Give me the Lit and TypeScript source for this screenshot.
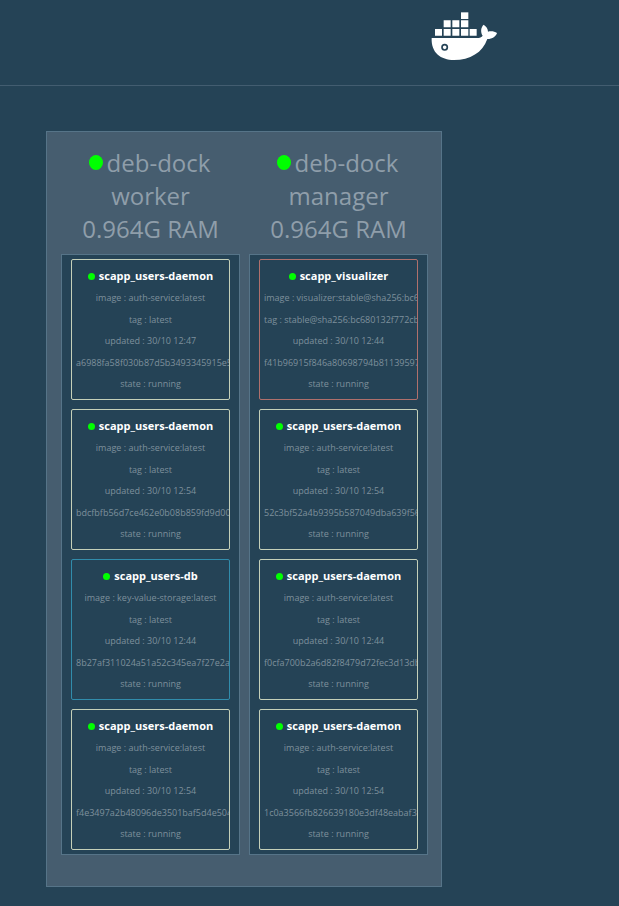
import { LitElement, html, css } from "lit";
import { customElement, property } from "lit/decorators.js";
import { classMap } from "lit/directives/class-map.js";

interface Task {
  name: string;
  image: string;
  tag: string;
  updated: string;
  id: string;
  state: string;
  service: "daemon" | "visualizer" | "db";
}

interface SwarmNode {
  host: string;
  role: string;
  memory: string;
  tasks: Task[];
}

const daemon = (updated: string, id: string): Task => ({
  name: "scapp_users-daemon",
  image: "auth-service:latest",
  tag: "latest",
  updated,
  id,
  state: "running",
  service: "daemon",
});

const NODES: SwarmNode[] = [
  {
    host: "deb-dock",
    role: "worker",
    memory: "0.964G RAM",
    tasks: [
      daemon("30/10 12:47", "a6988fa58f030b87d5b3493345915e5"),
      daemon("30/10 12:54", "bdcfbfb56d7ce462e0b08b859fd9d00"),
      {
        name: "scapp_users-db",
        image: "key-value-storage:latest",
        tag: "latest",
        updated: "30/10 12:44",
        id: "8b27af311024a51a52c345ea7f27e2ad",
        state: "running",
        service: "db",
      },
      daemon("30/10 12:54", "f4e3497a2b48096de3501baf5d4e504"),
    ],
  },
  {
    host: "deb-dock",
    role: "manager",
    memory: "0.964G RAM",
    tasks: [
      {
        name: "scapp_visualizer",
        image: "visualizer:stable@sha256:bc680132f772cb4",
        tag: "stable@sha256:bc680132f772cb4",
        updated: "30/10 12:44",
        id: "f41b96915f846a80698794b811395973",
        state: "running",
        service: "visualizer",
      },
      daemon("30/10 12:54", "52c3bf52a4b9395b587049dba639f56"),
      daemon("30/10 12:44", "f0cfa700b2a6d82f8479d72fec3d13db"),
      daemon("30/10 12:54", "1c0a3566fb826639180e3df48eabaf3b"),
    ],
  },
];

@customElement("task-card")
export class TaskCard extends LitElement {
  @property({ attribute: false }) task!: Task;

  static styles = css`
    :host {
      display: block;
    }
    .card {
      box-sizing: border-box;
      min-height: 141px;
      padding: 5px 4px;
      display: grid;
      grid-template-columns: minmax(0, 1fr);
      grid-auto-rows: 1fr;
      align-items: center;
      border: 1px solid;
      border-radius: 2px;
      overflow: hidden;
      font-size: 9px;
      line-height: 16px;
      text-align: center;
      white-space: nowrap;
      color: #7e909c;
    }
    .daemon {
      border-color: #c5d0b9;
    }
    .visualizer {
      border-color: #b0706c;
    }
    .db {
      border-color: #318cab;
    }
    .name {
      margin: 0;
      font-size: 11px;
      font-weight: 700;
      color: #fff;
    }
    .row {
      margin: 0;
      padding-top: 2px;
    }
    .dot {
      display: inline-block;
      width: 7px;
      height: 7px;
      margin-right: 4px;
      border-radius: 50%;
      background: #0f0;
    }
  `;

  render() {
    const t = this.task;
    return html`
      <article class=${classMap({ card: true, [t.service]: true })}>
        <h2 class="name"><span class="dot"></span>${t.name}</h2>
        <p class="row">image : ${t.image}</p>
        <p class="row">tag : ${t.tag}</p>
        <p class="row">updated : ${t.updated}</p>
        <p class="row">${t.id}</p>
        <p class="row">state : ${t.state}</p>
      </article>
    `;
  }
}

@customElement("app-root")
export class AppRoot extends LitElement {
  static styles = css`
    :host {
      display: block;
      min-height: 100vh;
      background: #254356;
      font-family: "Open Sans", "Noto Sans", sans-serif;
    }
    .header {
      display: grid;
      grid-template-columns: 1fr 1fr;
      padding: 12px 0 25px;
      border-bottom: 1px solid #435d70;
    }
    .logo {
      grid-column: 2;
      justify-self: center;
      width: 66px;
      height: 48px;
    }
    .main {
      display: flex;
      padding: 45px 46px 19px;
    }
    .cluster {
      display: flex;
      gap: 9px;
      padding: 14px 13px 31px 14px;
      border: 1px solid #567488;
      background: #465d6f;
    }
    .node {
      width: 179px;
    }
    .title {
      margin: 0 0 9px;
      font-size: 24px;
      line-height: 33px;
      font-weight: 400;
      text-align: center;
      color: #8f9eaa;
    }
    .line {
      display: block;
    }
    .host {
      display: flex;
      align-items: center;
      justify-content: center;
      gap: 4px;
      padding-right: 2px;
    }
    .dot {
      width: 14px;
      height: 15px;
      border-radius: 50%;
      background: #0f0;
    }
    .tasks {
      display: flex;
      flex-direction: column;
      gap: 9px;
      padding: 4px 9px;
      border: 1px solid #567488;
      background: #254356;
    }
  `;

  render() {
    return html`
      <header class="header">
        <svg class="logo" viewBox="34 36 198 144" fill="#fff" role="img" aria-label="Docker">
          <path d="M124 37h22v20h-22z" />
          <path d="M72 61h21v21H72zM98 61h21v21H98zM124 61h22v21h-22z" />
          <path d="M46 87h21v20H46zM72 87h21v20H72zM98 87h21v20H98zM124 87h22v20h-22zM150 87h21v20h-21z" />
          <path
            d="M36 114H172C180 114 186 111 189 107C182 97 183 82 192 74C200 79 205 86 205 95C214 93 225 94 232 99C229 109 219 117 203 117C189 158 151 180 103 180C63 180 34 158 36 114Z"
          />
          <circle cx="75" cy="142" r="8" fill="#fff" stroke="#254356" stroke-width="5" />
        </svg>
      </header>
      <main class="main">
        <div class="cluster">
          ${NODES.map(
            (n) => html`
              <section class="node">
                <h1 class="title">
                  <span class="host"><span class="dot"></span>${n.host}</span>
                  <span class="line">${n.role}</span>
                  <span class="line">${n.memory}</span>
                </h1>
                <div class="tasks">
                  ${n.tasks.map((t) => html`<task-card .task=${t}></task-card>`)}
                </div>
              </section>
            `
          )}
        </div>
      </main>
    `;
  }
}
